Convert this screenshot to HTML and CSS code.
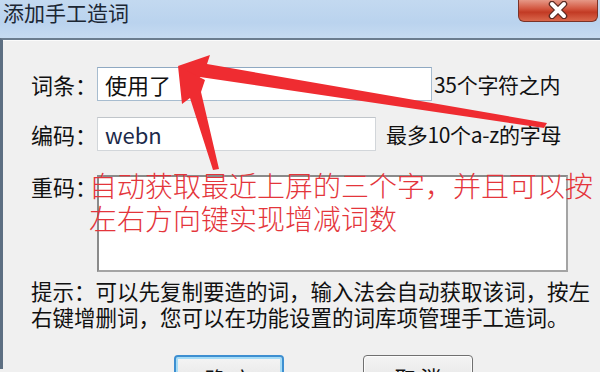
FILE: index.html
```html
<!DOCTYPE html>
<html lang="zh-CN">
<head>
  <meta charset="UTF-8" />
  <title>添加手工造词</title>
  <link rel="stylesheet" href="styles.css">
</head>
<body>
  <div class="window">
    <div class="titlebar">
      <span class="title">添加手工造词</span>
      <div class="close">
        <svg width="30" height="18" viewBox="0 0 30 18">
          <path d="M9 3 L21 15 M21 3 L9 15" stroke="#5a2a22" stroke-width="6.5" stroke-linecap="round"/>
          <path d="M9 3 L21 15 M21 3 L9 15" stroke="#fff" stroke-width="4" stroke-linecap="round"/>
        </svg>
      </div>
    </div>

    <div class="content">
      <div class="row">
        <label class="label">词条：</label>
        <div class="field field-word">使用了</div>
        <span class="note note-word">35个字符之内</span>
      </div>

      <div class="row row-code">
        <label class="label">编码：</label>
        <div class="field field-code">webn</div>
        <span class="note note-code">最多10个a-z的字母</span>
      </div>

      <div class="row row-dup">
        <label class="label label-dup">重码：</label>
        <div class="area"></div>
      </div>

      <p class="hint">提示：可以先复制要造的词，输入法会自动获取该词，按左<br>右键增删词，您可以在功能设置的词库项管理手工造词。</p>

      <div class="buttons">
        <button class="btn btn-default">确定</button>
        <button class="btn">取 消</button>
      </div>
    </div>

    <!-- annotation drawn over the screenshot -->
    <div class="annotation">自动获取最近上屏的三个字，并且可以按<br>左右方向键实现增减词数</div>
    <svg class="arrows" width="600" height="372" viewBox="0 0 600 372">
      <polygon points="178,66 210,55 207,64 547,123 544,128 200,77 196,84" fill="#ef2c31"/>
      <polygon points="178,66 205,80 201,92 219,169 213,170 190,98 182,104" fill="#ef2c31"/>
    </svg>
  </div>
</body>
</html>
```

FILE: styles.css
```css
body {
  margin: 0;
  width: 600px;
  height: 372px;
  overflow: hidden;
  font-family: "Noto Sans CJK SC", sans-serif;
  color: #111;
}
.window {
  position: relative;
  width: 600px;
  height: 372px;
  background: #f0f0f0;
}
.titlebar {
  height: 38px;
  background: linear-gradient(to bottom, #c3d9f0, #bad3ee 60%, #c6dbf1);
  display: flex;
  justify-content: space-between;
  align-items: flex-start;
}
.title {
  font-size: 21px;
  line-height: 25px;
  padding-left: 3px;
  color: #1b2633;
}
.close {
  width: 80px;
  height: 23px;
  margin-right: 2px;
  margin-top: -1px;
  box-sizing: border-box;
  border: 1px solid #7a3328;
  border-top: none;
  border-radius: 0 0 6px 6px;
  background: linear-gradient(to bottom, #e8a08f, #d2553e 45%, #c23a24 60%, #d9674c);
  display: flex;
  justify-content: center;
  align-items: center;
}
.content {
  border-top: 2px solid #6b7d8f;
  border-left: 3px solid #5d6f82;
  box-shadow: inset 0 1px 0 #fbfbfb;
  padding: 27px 0 0 28px;
  height: 331px;
  box-sizing: border-box;
}
.row {
  display: flex;
  align-items: center;
  height: 34px;
}
.label {
  width: 66px;
  font-size: 22px;
  line-height: 30px;
  flex: none;
}
.field {
  box-sizing: border-box;
  height: 34px;
  background: #fff;
  font-size: 22px;
  line-height: 32px;
  padding-left: 7px;
}
.field-word {
  width: 335px;
  border: 1px solid #a7bccf;
  border-top-color: #8fa9c2;
}
.field-code {
  width: 279px;
  border: 1px solid #d2d6da;
  border-top-color: #c0c5ca;
  color: #1c2a4a;
}
.note {
  font-size: 21px;
  line-height: 30px;
  letter-spacing: -0.3px;
}
.note-word {
  margin-left: 2px;
}
.note-code {
  margin-left: 10px;
}
.row-code {
  margin-top: 16px;
}
.row-dup {
  margin-top: 24px;
  height: auto;
  align-items: flex-start;
}
.label-dup {
  margin-top: -4px;
}
.area {
  box-sizing: border-box;
  width: 471px;
  height: 97px;
  background: #fff;
  border: 2px solid #a4a4a4;
  border-top-color: #8a8a8a;
  border-left-color: #8a8a8a;
}
.hint {
  margin: 6px 0 0 0;
  font-size: 21.5px;
  line-height: 26px;
  white-space: nowrap;
}
.buttons {
  display: flex;
  gap: 79px;
  margin-top: 25px;
  padding-left: 143px;
}
.btn {
  width: 110px;
  height: 38px;
  box-sizing: border-box;
  font-family: inherit;
  font-size: 21px;
  line-height: 30px;
  padding: 6px 0 0;
  color: #111;
  border: 1px solid #707070;
  border-radius: 4px;
  background: linear-gradient(to bottom, #f4f4f4, #ebebeb 50%, #dddddd 51%, #cfcfcf);
  box-shadow: inset 0 0 0 1px #fcfcfc;
}
.btn-default {
  border: 2px solid #3d8fd1;
  letter-spacing: 6px;
  text-indent: 6px;
  box-shadow: inset 0 0 0 2px #a6dcf6;
}
.annotation {
  position: absolute;
  left: 89px;
  top: 169px;
  font-size: 28px;
  font-weight: 300;
  line-height: 33px;
  color: #e4353b;
  white-space: nowrap;
}
.arrows {
  position: absolute;
  left: 0;
  top: 0;
  pointer-events: none;
}
```
